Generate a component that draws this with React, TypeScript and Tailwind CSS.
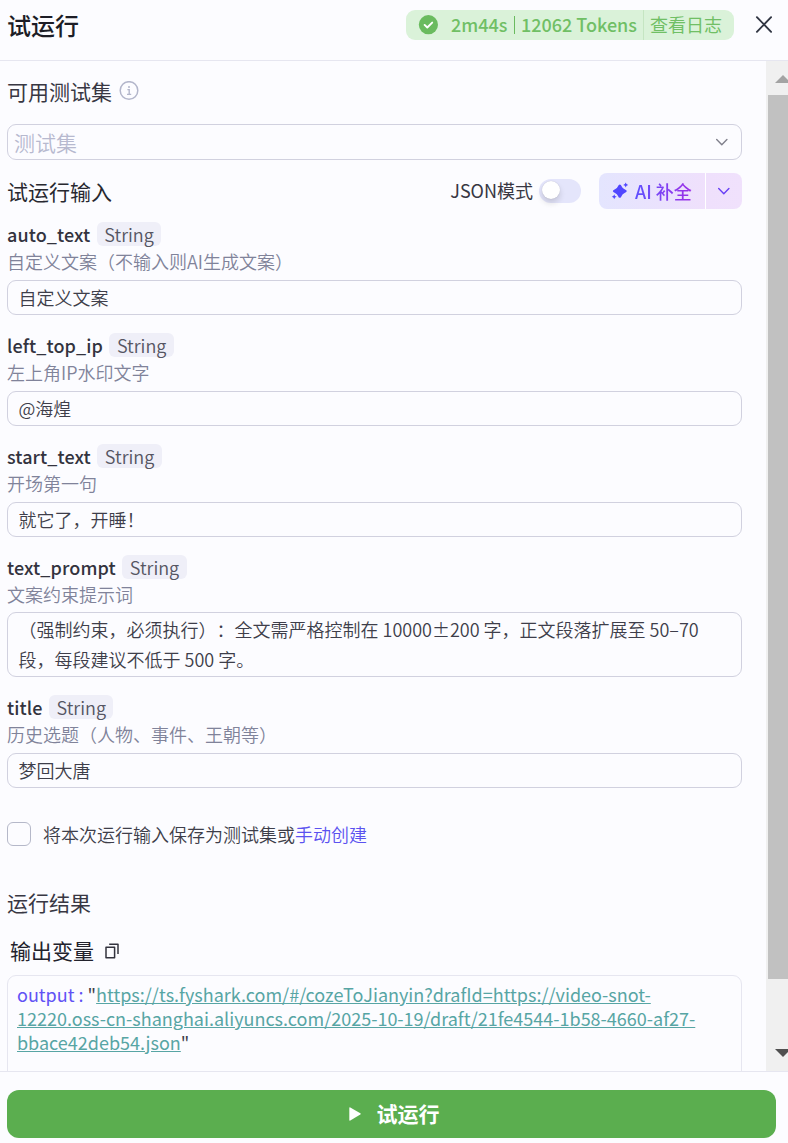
import { useState } from 'react';

interface Field {
  name: string;
  type: string;
  description: string;
  value: string;
  multiline?: boolean;
}

const fields: Field[] = [
  { name: 'auto_text', type: 'String', description: '自定义文案（不输入则AI生成文案）', value: '自定义文案' },
  { name: 'left_top_ip', type: 'String', description: '左上角IP水印文字', value: '@海煌' },
  { name: 'start_text', type: 'String', description: '开场第一句', value: '就它了，开睡！' },
  {
    name: 'text_prompt',
    type: 'String',
    description: '文案约束提示词',
    value: '（强制约束，必须执行）：全文需严格控制在 10000±200 字，正文段落扩展至 50–70 段，每段建议不低于 500 字。',
    multiline: true,
  },
  { name: 'title', type: 'String', description: '历史选题（人物、事件、王朝等）', value: '梦回大唐' },
];

function ChevronIcon({ className }: { className: string }) {
  return (
    <svg viewBox="0 0 12 8" fill="none" stroke="currentColor" strokeWidth="1.4" strokeLinecap="round" strokeLinejoin="round" className={className}>
      <path d="M0.7 1.5L5.8 6.7L10.9 1.5" />
    </svg>
  );
}

function Header() {
  return (
    <header className="flex h-[61px] shrink-0 items-start border-b border-[#e6e6f0] pl-[7px] pr-[16px]">
      <h1 className="mt-[7px] text-[24px] leading-9 font-medium text-[#1d1d26]">试运行</h1>
      <div className="mt-[10px] ml-auto flex h-[30px] items-center rounded-[9px] bg-[#daf2d9] text-[18px] leading-7 font-medium text-[#70bf65]">
        <svg viewBox="0 0 20 20" className="ml-[12px] h-5 w-5">
          <circle cx="10.4" cy="9.7" r="9.6" fill="#6abb5f" />
          <path d="M6.6 9.9L9.3 12.5L14.2 7.6" fill="none" stroke="white" strokeWidth="1.9" strokeLinecap="round" strokeLinejoin="round" />
        </svg>
        <span className="ml-[13px] w-[57px] pb-[2px] whitespace-nowrap">2m44s</span>
        <span className="ml-[6px] h-[18px] w-px bg-[#6abb5f]" />
        <span className="ml-[6px] w-[117px] pb-[2px] whitespace-nowrap">12062 Tokens</span>
        <span className="ml-[5px] h-[30px] w-px bg-[#c5e5c2]" />
        <button className="ml-[6px] mr-[12px] w-[72px] pb-[2px] font-normal whitespace-nowrap">查看日志</button>
      </div>
      <button className="mt-[16px] ml-[21px] text-[#303542]">
        <svg viewBox="0 0 17 17" fill="none" stroke="currentColor" strokeWidth="1.9" strokeLinecap="round" className="h-[17px] w-[17px]">
          <path d="M1.9 1.2L16.1 15.8M16.1 1.2L1.9 15.8" />
        </svg>
      </button>
    </header>
  );
}

function AiButton() {
  return (
    <div className="flex h-9 w-[143px] overflow-hidden rounded-[8px] bg-linear-to-r from-[#e4e5fe] via-[#efe0fc] via-75% to-[#f0e1fc]">
      <button className="flex w-[106px] items-center pl-[12px]">
        <svg viewBox="0 0 18 18" fill="#5147ff" className="h-[18px] w-[18px]">
          <path d="M8.8 2.4Q10 2.4 10.6 4.3Q11.4 6.4 13.6 7.3Q15.8 8.2 15.8 9.1Q15.8 10 13.6 10.9Q11.4 11.8 10.6 13.9Q10 15.8 8.8 15.8Q7.6 15.8 7 13.9Q6.2 11.8 4 10.9Q1.8 10 1.8 9.1Q1.8 8.2 4 7.3Q6.2 6.4 7 4.3Q7.6 2.4 8.8 2.4Z" />
          <path d="M14.7 0.4L15.5 2.1L17.2 2.9L15.5 3.7L14.7 5.4L13.9 3.7L12.2 2.9L13.9 2.1Z" />
          <path d="M3.2 12.2L4 13.9L5.7 14.7L4 15.5L3.2 17.2L2.4 15.5L0.7 14.7L2.4 13.9Z" />
        </svg>
        <span className="ml-[6px] bg-linear-to-r from-[#5d4fff] to-[#9b2be6] bg-clip-text text-[18px] leading-7 font-medium whitespace-nowrap text-transparent">AI 补全</span>
      </button>
      <span className="w-px bg-white" />
      <button className="flex flex-1 items-center justify-center text-[#6840f5]">
        <ChevronIcon className="h-2 w-3" />
      </button>
    </div>
  );
}

function FieldItem({ field }: { field: Field }) {
  return (
    <div className="mb-[18px]">
      <div className="flex h-6 items-center gap-[6.5px]">
        <span className="text-[18px] leading-6 font-medium tracking-[0.1px] text-[#33333e]">{field.name}</span>
        <span className="flex h-6 items-center rounded-[6px] bg-[#efeff8] px-[7.5px] text-[18px] font-[350] text-[#555562]">{field.type}</span>
      </div>
      <p className="mt-[3px] text-[18px] leading-6 font-[350] text-[#80839a]">{field.description}</p>
      {field.multiline ? (
        <div className="mt-[6px] h-[65px] rounded-[9px] border border-[#d1d1df] pt-px pr-[11px] pl-[10.5px] text-[18px] leading-[30px] font-[350] text-[#3e3e4a] [text-spacing-trim:space-all]">
          {field.value}
        </div>
      ) : (
        <div className="mt-[7px] flex h-[35px] items-center rounded-[9px] border border-[#d1d1df] px-[10.5px] text-[18px] font-[350] text-[#3e3e4a]">
          {field.value}
        </div>
      )}
    </div>
  );
}

function Scrollbar() {
  return (
    <div className="flex w-[22px] shrink-0 flex-col overflow-hidden bg-[#f0f0f0]">
      <svg viewBox="0 0 22 34" className="h-[34px] w-[22px] shrink-0">
        <path d="M9 22L17 14L25 22Z" fill="#a3a3a3" />
      </svg>
      <div className="ml-[2px] h-[884px] shrink-0 bg-[#c1c1c1]" />
      <svg viewBox="0 0 22 34" className="mt-auto h-[34px] w-[22px] shrink-0">
        <path d="M9 12L25 12L17 20Z" fill="#505050" />
      </svg>
    </div>
  );
}

export default function App() {
  const [jsonMode, setJsonMode] = useState(false);

  return (
    <div className="flex h-[1143px] w-[788px] flex-col overflow-hidden bg-[#fcfcff] font-['Noto_Sans_CJK_SC',sans-serif]">
      <Header />

      <div className="flex min-h-0 flex-1">
        <main className="min-w-0 flex-1 overflow-hidden pl-[7px] pr-[24px]">
          {/* Test set */}
          <div className="mt-[15px] flex h-[30px] items-center text-[21px] leading-[30px] text-[#383743]">
            可用测试集
            <svg viewBox="0 0 20 20" fill="none" stroke="#b3b6cb" className="ml-[6.5px] h-5 w-5">
              <circle cx="10" cy="9.5" r="8.8" strokeWidth="1.5" />
              <path d="M8.4 8.6H10.2V13.3M8 13.4H12.2" strokeWidth="1.4" />
              <circle cx="10" cy="6" r="1" fill="#b3b6cb" stroke="none" />
            </svg>
          </div>
          <div className="mt-[18px] flex h-9 items-center justify-between rounded-[9px] border border-[#d1d1df] pr-[13px] pl-[6px]">
            <span className="text-[21px] leading-[34px] font-[350] text-[#b7b9cf]">测试集</span>
            <ChevronIcon className="h-2 w-3 text-[#80808c]" />
          </div>

          {/* Inputs */}
          <div className="mt-[13px] flex h-9 items-center">
            <h2 className="text-[21px] leading-9 text-[#28282f]">试运行输入</h2>
            <span className="ml-auto text-[18px] leading-[34px] pb-[2px] text-[#383743]">JSON模式</span>
            <button
              onClick={() => setJsonMode(!jsonMode)}
              className={`ml-[6px] mr-[18px] flex h-6 w-[42px] items-center rounded-full px-[3px] pb-[2px] ${jsonMode ? 'justify-end bg-[#5147ff]' : 'bg-[#e4e5fb]'}`}
            >
              <span className="h-[18px] w-[18px] rounded-full bg-white shadow-[0_4px_6px_rgba(0,0,0,0.14),0_0_1px_rgba(0,0,0,0.2)]" />
            </button>
            <AiButton />
          </div>

          <div className="mt-[13px]">
            {fields.map((field) => (
              <FieldItem key={field.name} field={field} />
            ))}
          </div>

          <div className="mt-[34px] flex h-6 items-center">
            <span className="h-6 w-6 rounded-[6px] border border-[#b5b8c9]" />
            <span className="ml-[12px] text-[18px] font-[350] text-[#3e3e4a]">
              将本次运行输入保存为测试集或<a className="text-[#5b52f0]">手动创建</a>
            </span>
          </div>

          {/* Result */}
          <h2 className="mt-[41px] text-[21px] leading-[30px] text-[#383743]">运行结果</h2>
          <div className="mt-[19px] flex h-[30px] items-center pl-[3px] text-[21px] text-[#22222c]">
            输出变量
            <svg viewBox="0 0 16 16" fill="none" stroke="#33333e" strokeWidth="1.5" strokeLinejoin="round" className="ml-[10px] h-4 w-4">
              <path d="M2 4.2H10.6V14.8H2Z" />
              <path d="M5.2 1.2H14V11" />
            </svg>
          </div>
          <div className="mt-[9px] h-[160px] rounded-[9px] border border-[#e6e6f0] px-[9px] pt-[6px] text-[18px] leading-6 text-[#3e3e4a]">
            <span className="text-[#6152f5]">output : </span>"
            <a className="text-[#57a5a4] underline">
              https://ts.fyshark.com/#/cozeToJianyin?drafId=https://video-snot-<br />
              12220.oss-cn-shanghai.aliyuncs.com/2025-10-19/draft/21fe4544-1b58-4660-af27-<br />
              bbace42deb54.json
            </a>"
          </div>
        </main>
        <Scrollbar />
      </div>

      <footer className="h-[72px] shrink-0 border-t border-[#e6e6f0] pt-[18px] pr-[12px] pl-[7px]">
        <button className="flex h-12 w-full items-center justify-center rounded-[12px] bg-[#5bae4f] pl-[5px] text-[21px] font-bold text-white">
          <svg viewBox="0 0 12 14" fill="white" className="mr-[16px] h-[14px] w-3">
            <path d="M0.3 1.1Q0.3 0 1.3 0.5L11.3 6.3Q12.2 7 11.3 7.6L1.3 13.5Q0.3 14 0.3 12.9Z" />
          </svg>
          试运行
        </button>
      </footer>
    </div>
  );
}
